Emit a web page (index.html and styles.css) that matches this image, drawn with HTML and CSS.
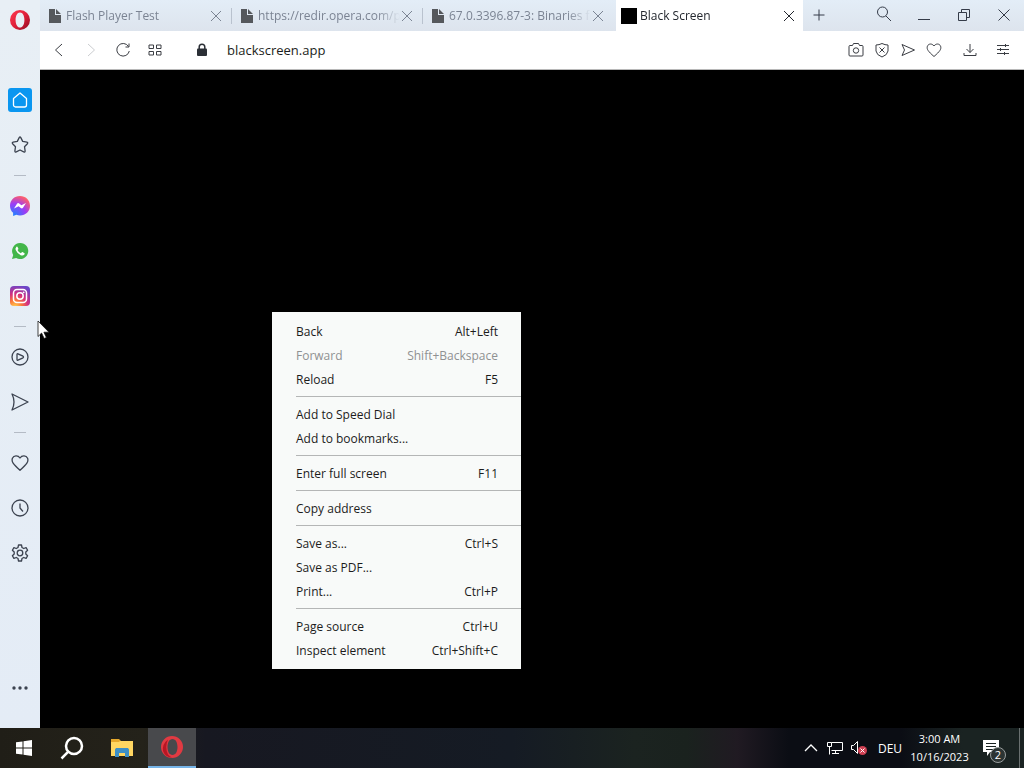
FILE: index.html
```
<!DOCTYPE html>
<html lang="en">
<head>
    <meta charset="UTF-8">
    <meta name="viewport" content="width=device-width, initial-scale=1.0">
    <title>Black Screen</title>
    <link rel="stylesheet" href="styles.css">
</head>
<body>
    <div class="desktop">
        <div class="browser">
            <nav class="sidebar">
                <button class="side-btn logo" aria-label="Opera">
                    <svg width="20" height="20" viewBox="0 0 20 20">
                        <defs>
                            <linearGradient id="opera" x1="0" y1="0" x2="1" y2="1">
                                <stop offset="0" stop-color="#ff3a50"/>
                                <stop offset="0.5" stop-color="#e0203a"/>
                                <stop offset="1" stop-color="#8e0a20"/>
                            </linearGradient>
                        </defs>
                        <path fill="url(#opera)" fill-rule="evenodd" d="M10 0a10 10 0 1 0 0 20a10 10 0 1 0 0-20zM10 2.400c2.800 0 4.400 3.400 4.400 7.600s-1.600 7.600-4.400 7.600s-4.400-3.400-4.400-7.600s1.600-7.600 4.400-7.600z"/>
                    </svg>
                </button>
                <button class="side-btn" aria-label="Home">
                    <span class="home">
                        <svg class="line" width="18" height="18" viewBox="0 0 18 18"><path d="M2.500 7.500L9 2l6.500 5.500V14a2 2 0 0 1-2 2h-9a2 2 0 0 1-2-2z"/></svg>
                    </span>
                </button>
                <button class="side-btn" aria-label="Bookmarks">
                    <svg class="line" width="18" height="18" viewBox="0 0 18 18"><path d="M8.200 1.600q.8-1.200 1.600 0l1.900 3.800l4.200.7q1.400.4.500 1.600l-2.900 3l.6 4.200q0 1.500-1.400 1L9 14l-3.700 1.900q-1.400.5-1.400-1l.6-4.200l-2.900-3q-.9-1.200.5-1.600l4.200-.7z"/></svg>
                </button>
                <hr class="side-sep">
                <button class="side-btn" aria-label="Messenger">
                    <svg width="20" height="20" viewBox="0 0 20 20">
                        <defs>
                            <radialGradient id="messenger" cx="0.2" cy="1" r="1.1">
                                <stop offset="0" stop-color="#1a86ff"/>
                                <stop offset="0.55" stop-color="#9a3cf8"/>
                                <stop offset="0.9" stop-color="#f2587c"/>
                                <stop offset="1" stop-color="#ff6a68"/>
                            </radialGradient>
                        </defs>
                        <path fill="url(#messenger)" d="M10 0C4.300 0 0 4.100 0 9.700c0 2.900 1.200 5.400 3.100 7.100V20l3.200-1.200c1.100.4 2.400.6 3.700.6c5.700 0 10-4.100 10-9.700S15.700 0 10 0z"/>
                        <path fill="#fff" d="M4 12.500l3-4.700q.9-1.200 2.200-.3l2.200 1.700l4.600-2.200l-3 4.700q-.9 1.200-2.200.3l-2.200-1.700z"/>
                    </svg>
                </button>
                <button class="side-btn" aria-label="WhatsApp">
                    <svg width="18" height="18" viewBox="0 0 18 18">
                        <path fill="#43b64a" d="M9.200 1a8 8 0 0 0-7 12L1 17l4.200-1.100A8 8 0 1 0 9.200 1z"/>
                        <path fill="#fff" d="M6.400 4.700q-.6-.4-1.100.2q-1.300 1.300-.6 3.100q1.400 3.500 5.100 5.200q2.100.8 3.600-.7q.5-.8.100-1.300l-2-1.100q-.4-.1-.7.200l-.9 1q-2.300-.9-3.400-3.200l.8-.9q.2-.3 0-.7z"/>
                    </svg>
                </button>
                <button class="side-btn" aria-label="Instagram">
                    <svg width="20" height="20" viewBox="0 0 20 20">
                        <defs>
                            <radialGradient id="instagram" cx="0.25" cy="1.050" r="1.100">
                                <stop offset="0" stop-color="#ffd34f"/>
                                <stop offset="0.3" stop-color="#fb7a3a"/>
                                <stop offset="0.6" stop-color="#d42f80"/>
                                <stop offset="1" stop-color="#6b45c8"/>
                            </radialGradient>
                        </defs>
                        <rect width="20" height="20" rx="4" fill="url(#instagram)"/>
                        <g fill="none" stroke="#fff" stroke-width="1.500">
                            <rect x="3.500" y="3.500" width="13" height="13" rx="3.500"/>
                            <circle cx="10" cy="10" r="3.200"/>
                        </g>
                        <circle cx="13.700" cy="6.300" r="0.900" fill="#fff"/>
                    </svg>
                </button>
                <hr class="side-sep">
                <button class="side-btn" aria-label="Player">
                    <svg class="line" width="18" height="18" viewBox="0 0 18 18"><circle cx="9" cy="9" r="8"/><path d="M6 6.500q0-1 1-.7l5 2.400q1 .8 0 1.600l-5 2.400q-1 .3-1-.7z"/></svg>
                </button>
                <button class="side-btn" aria-label="My Flow">
                    <svg class="line" width="18" height="18" viewBox="0 0 18 18"><path d="M1 1l16 8L1 17q4-8 0-16z"/></svg>
                </button>
                <hr class="side-sep">
                <button class="side-btn" aria-label="Favorites">
                    <svg class="line" width="18" height="18" viewBox="0 0 18 18"><path d="M9 4C7 .9 2.800 1.200 1.400 4.200C.2 7.500 2 9.800 9 16.200C16 9.800 17.800 7.500 16.600 4.200C15.200 1.200 11 .9 9 4z"/></svg>
                </button>
                <button class="side-btn" aria-label="History">
                    <svg class="line" width="18" height="18" viewBox="0 0 18 18"><circle cx="9" cy="9" r="8"/><path d="M9 4.500V9l3 3.500"/></svg>
                </button>
                <button class="side-btn" aria-label="Settings">
                    <svg class="line" width="18" height="18" viewBox="0 0 18 18"><path d="M7.500 1h3l.5 2.500l1.700 1l2.400-.9l1.500 2.600L14.800 8v2l1.800 1.800l-1.500 2.600l-2.400-.9l-1.700 1L10.500 17h-3L7 14.500l-1.700-1l-2.400.9l-1.500-2.600L3.200 10V8L1.400 6.200l1.500-2.600l2.400.9l1.700-1z"/><circle cx="9" cy="9" r="2.800"/></svg>
                </button>
                <button class="side-btn more" aria-label="More">
                    <svg width="16" height="4" viewBox="0 0 16 4" fill="#3c4350"><circle cx="2" cy="2" r="1.700"/><circle cx="8" cy="2" r="1.700"/><circle cx="14" cy="2" r="1.700"/></svg>
                </button>
            </nav>

            <div class="window">
                <div class="tab-bar">
                    <div class="tab">
                        <svg class="favicon" width="14" height="14" viewBox="0 0 14 14"><path fill="#55585c" d="M1 0h6v6h6v8H1zM8 0l5 5H8z"/></svg>
                        <span class="tab-title">Flash Player Test</span>
                        <button class="close" aria-label="Close tab"><svg class="line" width="12" height="12" viewBox="0 0 12 12"><path d="M1 1l10 10M11 1L1 11"/></svg></button>
                    </div>
                    <div class="tab">
                        <svg class="favicon" width="14" height="14" viewBox="0 0 14 14"><path fill="#55585c" d="M1 0h6v6h6v8H1zM8 0l5 5H8z"/></svg>
                        <span class="tab-title">https://redir.opera.com/p</span>
                        <button class="close" aria-label="Close tab"><svg class="line" width="12" height="12" viewBox="0 0 12 12"><path d="M1 1l10 10M11 1L1 11"/></svg></button>
                    </div>
                    <div class="tab">
                        <svg class="favicon" width="14" height="14" viewBox="0 0 14 14"><path fill="#55585c" d="M1 0h6v6h6v8H1zM8 0l5 5H8z"/></svg>
                        <span class="tab-title">67.0.3396.87-3: Binaries fo</span>
                        <button class="close" aria-label="Close tab"><svg class="line" width="12" height="12" viewBox="0 0 12 12"><path d="M1 1l10 10M11 1L1 11"/></svg></button>
                    </div>
                    <div class="tab active">
                        <span class="black-icon"></span>
                        <span class="tab-title">Black Screen</span>
                        <button class="close" aria-label="Close tab"><svg class="line" width="12" height="12" viewBox="0 0 12 12"><path d="M1 1l10 10M11 1L1 11"/></svg></button>
                    </div>
                    <button class="new-tab" aria-label="New tab"><svg class="line" width="12" height="12" viewBox="0 0 12 12"><path d="M6 0.500v11M0.500 6h11"/></svg></button>
                    <div class="window-controls">
                        <button aria-label="Search tabs"><svg class="line" width="16" height="18" viewBox="0 0 16 18"><circle cx="6.500" cy="6" r="5"/><path d="M10 10l5 5"/></svg></button>
                        <button aria-label="Minimize"><svg class="line" width="12" height="10" viewBox="0 0 12 10"><path d="M0 9.500h12"/></svg></button>
                        <button aria-label="Restore"><svg class="line" width="12" height="12" viewBox="0 0 12 12"><path d="M0.500 3.500h8v8h-8zM3.500 3.500v-3h8v8h-3"/></svg></button>
                        <button aria-label="Close"><svg class="line" width="12" height="12" viewBox="0 0 12 12"><path d="M0.500 0.500l11 11M11.500 0.500l-11 11"/></svg></button>
                    </div>
                </div>

                <div class="toolbar">
                    <button class="tool" aria-label="Back"><svg class="line" width="16" height="16" viewBox="0 0 16 16"><path d="M11 2L4.500 8l6.500 6"/></svg></button>
                    <button class="tool" aria-label="Forward" disabled><svg class="line" width="16" height="16" viewBox="0 0 16 16"><path d="M5 2l6.500 6L5 14"/></svg></button>
                    <button class="tool" aria-label="Reload"><svg class="line" width="16" height="16" viewBox="0 0 16 16"><path d="M13.500 4.500A6.300 6.300 0 1 0 14.300 9M14 1.500v3.500h-3.500"/></svg></button>
                    <button class="tool" aria-label="Speed Dial"><svg class="line" width="14" height="12" viewBox="0 0 14 12"><path d="M1 1h4.500v3.500H1zM8.500 1H13v3.500H8.500zM1 7.500h4.500V11H1zM8.500 7.500H13V11H8.500z"/></svg></button>
                    <button class="lock" aria-label="Site information"><svg width="12" height="14" viewBox="0 0 12 14"><rect x="1" y="5.500" width="10" height="7.500" rx="1" fill="#2b2f36"/><path d="M3.200 6V4a2.800 2.800 0 0 1 5.600 0v2" fill="none" stroke="#2b2f36" stroke-width="1.500"/></svg></button>
                    <input class="address" type="text" value="blackscreen.app" aria-label="Address">
                    <div class="actions">
                        <button class="tool" aria-label="Snapshot"><svg class="line" width="16" height="16" viewBox="0 0 16 16"><path d="M2 3.500h2.500l1-2h5l1 2H14a1 1 0 0 1 1 1V13a1 1 0 0 1-1 1H2a1 1 0 0 1-1-1V4.500a1 1 0 0 1 1-1z"/><circle cx="8" cy="8.500" r="2.700"/></svg></button>
                        <button class="tool" aria-label="Ad blocker"><svg class="line" width="16" height="16" viewBox="0 0 16 16"><path d="M8 1.500q3 1.500 6 1.500v6q-.5 4-6 6q-5.500-2-6-6V3q3 0 6-1.500zM5.500 5.500l5 5M10.500 5.500l-5 5"/></svg></button>
                        <button class="tool" aria-label="My Flow"><svg class="line" width="16" height="16" viewBox="0 0 16 16"><path d="M2 2.500L14.500 8L2 13.500L4.500 8z"/></svg></button>
                        <button class="tool" aria-label="Add to bookmarks"><svg class="line" width="16" height="16" viewBox="0 0 16 16"><path d="M8 4C6 1.200 2.500 1.500 1.400 4.200C.5 7.200 2 9.200 8 14.500C14 9.200 15.500 7.200 14.600 4.200C13.500 1.500 10 1.200 8 4z"/></svg></button>
                        <button class="tool downloads" aria-label="Downloads"><svg class="line" width="16" height="16" viewBox="0 0 16 16"><path d="M8 2v8.500M4.500 7L8 10.500L11.500 7M2 11v2.500h12V11"/></svg></button>
                        <button class="tool easy-setup" aria-label="Easy setup"><svg class="line" width="14" height="14" viewBox="0 0 14 14"><path d="M1 2.500h12M1 6.500h12M1 10.500h12M9.500 1v3M4.500 5v3M8.500 9v3"/></svg></button>
                    </div>
                </div>

                <main class="page">
                    <div class="context-menu" role="menu">
                        <button class="menu-item" role="menuitem"><span>Back</span><span>Alt+Left</span></button>
                        <button class="menu-item" role="menuitem" disabled><span>Forward</span><span>Shift+Backspace</span></button>
                        <button class="menu-item" role="menuitem"><span>Reload</span><span>F5</span></button>
                        <hr>
                        <button class="menu-item" role="menuitem"><span>Add to Speed Dial</span></button>
                        <button class="menu-item" role="menuitem"><span>Add to bookmarks...</span></button>
                        <hr>
                        <button class="menu-item" role="menuitem"><span>Enter full screen</span><span>F11</span></button>
                        <hr>
                        <button class="menu-item" role="menuitem"><span>Copy address</span></button>
                        <hr>
                        <button class="menu-item" role="menuitem"><span>Save as...</span><span>Ctrl+S</span></button>
                        <button class="menu-item" role="menuitem"><span>Save as PDF...</span></button>
                        <button class="menu-item" role="menuitem"><span>Print...</span><span>Ctrl+P</span></button>
                        <hr>
                        <button class="menu-item" role="menuitem"><span>Page source</span><span>Ctrl+U</span></button>
                        <button class="menu-item" role="menuitem"><span>Inspect element</span><span>Ctrl+Shift+C</span></button>
                    </div>
                </main>
            </div>
        </div>

        <footer class="taskbar">
            <button class="task" aria-label="Start"><svg width="16" height="16" viewBox="0 0 16 16" fill="#fff"><path d="M0 2.300L6.500 1.400v6.100H0zM7.500 1.200L16 0v7.500H7.500zM0 8.500h6.500v6.100L0 13.700zM7.500 8.500H16V16l-8.500-1.200z"/></svg></button>
            <button class="task" aria-label="Search"><svg width="24" height="24" viewBox="0 0 24 24" fill="none" stroke="#fff" stroke-width="2.500"><circle cx="14" cy="10" r="8"/><path d="M8.300 15.700L1.500 22.500"/></svg></button>
            <button class="task app" aria-label="File Explorer"><svg width="22" height="20" viewBox="0 0 22 20"><path fill="#e6a82c" d="M0 1h8l2 2h12v4H0z"/><path fill="#ffd661" d="M0 4h8l1-1h13v15H0z"/><path fill="#3d8fc6" d="M4 11.500l1-1.500h12l1 1.500V19h-4v-4H8v4H4z"/></svg></button>
            <button class="task app running" aria-label="Opera"><svg width="24" height="24" viewBox="0 0 24 24"><path fill="#e03a42" fill-rule="evenodd" d="M12 1a11 11 0 1 0 0 22a11 11 0 1 0 0-22zM12.500 4c3.200 0 5 3.600 5 8s-1.800 8-5 8s-5-3.600-5-8s1.800-8 5-8z"/><path fill="#b81624" d="M8 4.500Q4.500 12 8 19.500Q9.500 21.500 12 22.500Q5 22 3 16Q2 9 8 4.500z"/></svg></button>

            <div class="tray">
                <button class="tray-btn" aria-label="Show hidden icons"><svg width="14" height="8" viewBox="0 0 14 8" fill="none" stroke="#fff" stroke-width="1.300"><path d="M1 7l6-6l6 6"/></svg></button>
                <button class="tray-btn" aria-label="Network"><svg width="16" height="14" viewBox="0 0 16 14" fill="none" stroke="#fff"><path d="M4.500 1.500h11v8h-11M0.500 1.500h4v4h-4zM2.500 5.500v8M8.500 9.500v3M5 12.500h7"/></svg></button>
                <button class="tray-btn" aria-label="Volume muted"><svg width="18" height="16" viewBox="0 0 18 16"><path fill="none" stroke="#fff" d="M1.500 5.500h2l4-4v12l-4-4h-2z"/><circle cx="12.500" cy="10.500" r="4.500" fill="#cf3f52"/><path stroke="#fff" d="M10.500 8.500l4 4M14.500 8.500l-4 4"/></svg></button>
                <button class="language">DEU</button>
                <button class="clock"><span>3:00 AM</span><span>10/16/2023</span></button>
                <button class="notifications" aria-label="Notifications">
                    <svg width="18" height="18" viewBox="0 0 18 18"><path fill="#fff" d="M1 1h16v12h-9l-3 4v-4H1z"/><path stroke="#1a2322" d="M4 4.500h10M4 7.500h10M4 10.500h7"/></svg>
                    <span class="badge">2</span>
                </button>
                <span class="show-desktop"></span>
            </div>
        </footer>

        <svg class="cursor" width="13" height="20" viewBox="0 0 13 20"><path fill="#fff" stroke="#111" stroke-width="0.800" d="M1 1v15.500l3.600-3.400l2.500 5.400l2.300-1l-2.500-5.300H12z"/></svg>
    </div>
</body>
</html>
```
FILE: styles.css
```
* {
    box-sizing: border-box;
}

body {
    margin: 0;
    font-family: "Open Sans", "Noto Sans", sans-serif;
    font-size: 12px;
    background: #000;
}

button {
    display: flex;
    align-items: center;
    justify-content: center;
    margin: 0;
    padding: 0;
    border: 0;
    background: none;
    color: inherit;
    font: inherit;
}

svg {
    display: block;
    flex: none;
}

.line {
    fill: none;
    stroke: currentColor;
    stroke-linejoin: round;
}

.desktop {
    position: relative;
    display: flex;
    flex-direction: column;
    height: 100vh;
    overflow: hidden;
}

.browser {
    display: flex;
    flex: 1;
    min-height: 0;
}

/* Sidebar */
.sidebar {
    display: flex;
    flex-direction: column;
    flex: none;
    width: 40px;
    padding-bottom: 18px;
    background: linear-gradient(#e8eff5, #e4ecf6);
    color: #3c4350;
}

.side-btn {
    flex: none;
    height: 45px;
}

.side-btn .line {
    stroke-width: 1.3;
}

.logo {
    height: 40px;
    margin-bottom: 37px;
}

.home {
    display: flex;
    align-items: center;
    justify-content: center;
    width: 24px;
    height: 24px;
    border-radius: 3px;
    background: #0a96f0;
    color: #fff;
}

.side-sep {
    width: 12px;
    height: 1px;
    margin: 8px auto 7px;
    border: 0;
    background: #b4bbc5;
    flex: none;
}

.more {
    margin-top: auto;
}

/* Tabs */
.window {
    display: flex;
    flex-direction: column;
    flex: 1;
    min-width: 0;
}

.tab-bar {
    display: flex;
    height: 31px;
    background: linear-gradient(#e3edf7, #dde4ed);
    color: #343b48;
}

.tab {
    display: flex;
    align-items: center;
    flex: 0 1 191px;
    min-width: 0;
    padding: 0 8px;
    color: #7b8493;
}

.tab + .tab {
    padding-left: 9px;
    background: linear-gradient(#b9c2ce, #b9c2ce) left center / 1px 16px no-repeat;
}

.tab + .tab.active {
    flex-basis: 187px;
    margin-left: 3px;
    padding: 0 7px 0 5px;
    background: #fff;
    color: #23272e;
}

.favicon {
    margin-right: 4px;
}

.black-icon {
    flex: none;
    width: 16px;
    height: 16px;
    margin-right: 3px;
    background: #000;
}

.tab-title {
    flex: 1;
    overflow: hidden;
    white-space: nowrap;
    line-height: 20px;
    -webkit-mask-image: linear-gradient(to left, transparent, #000 24px);
    mask-image: linear-gradient(to left, transparent, #000 24px);
}

.close {
    flex: none;
    width: 14px;
    height: 14px;
}

.new-tab {
    width: 32px;
    padding-bottom: 2px;
}

.window-controls {
    display: flex;
    margin-left: auto;
}

.window-controls button {
    width: 40px;
    padding-bottom: 1px;
}

/* Toolbar */
.toolbar {
    display: flex;
    align-items: center;
    height: 39px;
    padding: 0 8px 0 3px;
    border-bottom: 1px solid #b8b8b8;
    background: #fff;
    color: #3a3d43;
}

.tool {
    width: 32px;
    height: 32px;
}

.tool:disabled {
    color: #cbcdd0;
}

.lock {
    width: 32px;
    height: 32px;
    margin-left: 15px;
}

.address {
    flex: 1;
    min-width: 0;
    height: 28px;
    margin-left: 9px;
    padding: 0;
    border: 0;
    outline: 0;
    background: none;
    color: #1b1d20;
    font: inherit;
    font-size: 13px;
}

.actions {
    display: flex;
}

.actions .tool {
    width: 26px;
}

.actions .downloads {
    width: 46px;
}

.actions .easy-setup {
    width: 26px;
    margin-left: -3px;
}

/* Page and context menu */
.page {
    position: relative;
    flex: 1;
    background: #000;
}

.context-menu {
    position: absolute;
    left: 232px;
    top: 242px;
    width: 249px;
    padding: 8px 0 6px;
    background: #f8faf9;
    color: #1c1c1c;
}

.menu-item {
    justify-content: space-between;
    width: 100%;
    height: 24px;
    padding: 0 23px 2px 24px;
}

.menu-item:disabled {
    color: #8f9192;
}

.context-menu hr {
    height: 1px;
    margin: 4px 0 6px 24px;
    border: 0;
    background: #b4b6b6;
}

/* Taskbar */
.taskbar {
    display: flex;
    flex: none;
    height: 40px;
    background: linear-gradient(90deg, #201e17 0, #24221a 14%, #171821 20%, #151b24 50%, #1b2320 62%, #1a221e 67%, #201a22 72%, #0b0d14 77%, #0b0d14 88%, #1a2322 94%);
    color: #fff;
}

.task {
    width: 48px;
}

.app {
    margin-left: 2px;
}

.running {
    border-bottom: 2px solid #76b4e8;
    background: #48494c;
}

.tray {
    display: flex;
    align-items: center;
    margin-left: auto;
}

.tray-btn {
    width: 24px;
    height: 40px;
}

.language {
    width: 38px;
    height: 40px;
}

.clock {
    flex-direction: column;
    width: 61px;
    font-size: 11px;
    line-height: 18px;
}

.notifications {
    position: relative;
    width: 42px;
    height: 40px;
}

.badge {
    position: absolute;
    left: 20px;
    top: 19px;
    width: 16px;
    height: 16px;
    border: 1px solid #9a9f9f;
    border-radius: 50%;
    background: #2c3433;
    font-size: 11px;
    line-height: 14px;
    text-align: center;
}

.show-desktop {
    width: 5px;
    height: 40px;
    margin-left: 7px;
    border-left: 1px solid #6a7070;
}

.cursor {
    position: absolute;
    left: 37px;
    top: 320px;
}
```
